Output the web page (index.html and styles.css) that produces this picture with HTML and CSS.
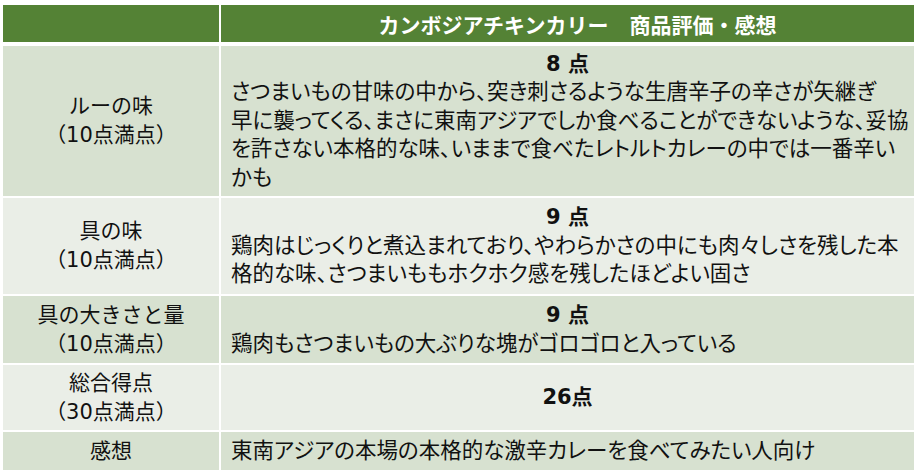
FILE: index.html
```html
<!DOCTYPE html>
<html lang="ja">
<head>
<meta charset="utf-8">
<title>カンボジアチキンカリー 商品評価・感想</title>
<link rel="stylesheet" href="styles.css">
</head>
<body>
<div class="table">
  <div class="cell head"></div>
  <div class="cell head title">カンボジアチキンカリー　商品評価・感想</div>

  <div class="cell label band">ルーの味<br>（10点満点）</div>
  <div class="cell body band">
    <div class="score">8 点</div>
    <div class="text">さつまいもの甘味の中から、突き刺さるような生唐辛子の辛さが矢継ぎ<br>早に襲ってくる、まさに東南アジアでしか食べることができないような、妥協<br>を許さない本格的な味、いままで食べたレトルトカレーの中では一番辛い<br>かも</div>
  </div>

  <div class="cell label light">具の味<br>（10点満点）</div>
  <div class="cell body light">
    <div class="score">9 点</div>
    <div class="text">鶏肉はじっくりと煮込まれており、やわらかさの中にも肉々しさを残した本<br>格的な味、さつまいももホクホク感を残したほどよい固さ</div>
  </div>

  <div class="cell label band">具の大きさと量<br>（10点満点）</div>
  <div class="cell body band">
    <div class="score">9 点</div>
    <div class="text">鶏肉もさつまいもの大ぶりな塊がゴロゴロと入っている</div>
  </div>

  <div class="cell label light">総合得点<br>（30点満点）</div>
  <div class="cell body light">
    <div class="score">26点</div>
  </div>

  <div class="cell label band">感想</div>
  <div class="cell body band">
    <div class="text">東南アジアの本場の本格的な激辛カレーを食べてみたい人向け</div>
  </div>
</div>
</body>
</html>
```
FILE: styles.css
```css
html, body {
  margin: 0;
  padding: 0;
  background: #ffffff;
}
body {
  font-family: "DejaVu Sans", "Noto Sans CJK JP", sans-serif;
  color: #111111;
}
.table {
  display: grid;
  grid-template-columns: 216px 693px;
  grid-template-rows: 39px 150px 96px 67px 65px 38px;
  column-gap: 2px;
  row-gap: 2px;
  margin: 5px 0 0 3px;
  width: 911px;
}
.cell {
  display: flex;
  flex-direction: column;
  justify-content: center;
}
.head {
  background: #548235;
  margin-bottom: 2px;
  color: #ffffff;
  font-weight: bold;
  font-size: 21px;
  align-items: center;
}
.title {
  padding-left: 20px;
}
.band {
  background: #d7e1d0;
}
.light {
  background: #eaeee7;
}
.label {
  align-items: center;
  text-align: center;
  font-size: 21px;
  line-height: 29px;
}
.body {
  padding-left: 10px;
  font-size: 21.5px;
  line-height: 28.5px;
  font-feature-settings: "palt";
}
.score {
  text-align: center;
  font-weight: bold;
  font-size: 21px;
  padding-right: 10px;
}
.text {
  white-space: nowrap;
}
```
